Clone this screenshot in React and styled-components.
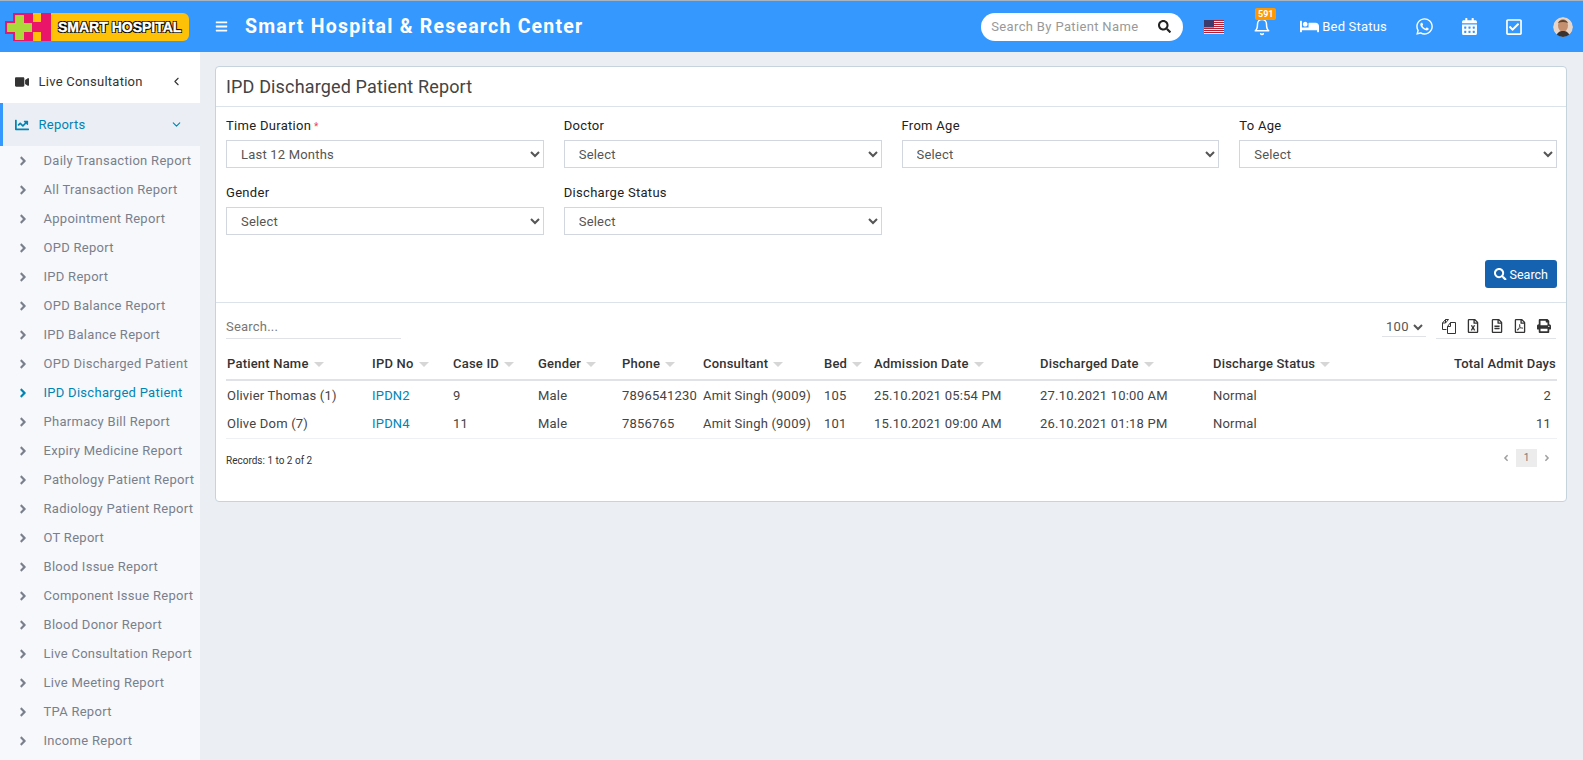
import React from 'react';
import styled, { createGlobalStyle } from 'styled-components';
import {
    FaVideo, FaChartLine, FaAngleLeft, FaAngleRight, FaBars, FaSearch, FaBed,
    FaWhatsapp, FaCalendarAlt, FaRegCheckSquare, FaRegFileExcel,
    FaRegFileAlt, FaRegFilePdf, FaPrint,
} from 'react-icons/fa';
import { FiBell, FiChevronLeft, FiChevronDown } from 'react-icons/fi';

const GlobalStyle = createGlobalStyle`
    html, body {
        margin: 0;
        height: 100%;
        overflow: hidden;
        background: #ebeff4;
        font-family: Roboto, "Liberation Sans", sans-serif;
        font-size: 13px;
        color: #444;
    }
    * { box-sizing: border-box; }
`;

const reports = [
    'Daily Transaction Report', 'All Transaction Report', 'Appointment Report', 'OPD Report',
    'IPD Report', 'OPD Balance Report', 'IPD Balance Report', 'OPD Discharged Patient',
    'IPD Discharged Patient', 'Pharmacy Bill Report', 'Expiry Medicine Report',
    'Pathology Patient Report', 'Radiology Patient Report', 'OT Report', 'Blood Issue Report',
    'Component Issue Report', 'Blood Donor Report', 'Live Consultation Report',
    'Live Meeting Report', 'TPA Report', 'Income Report',
];

const columns = [
    { title: 'Patient Name', width: 145 },
    { title: 'IPD No', width: 81 },
    { title: 'Case ID', width: 85 },
    { title: 'Gender', width: 84 },
    { title: 'Phone', width: 81 },
    { title: 'Consultant', width: 121 },
    { title: 'Bed', width: 50 },
    { title: 'Admission Date', width: 166 },
    { title: 'Discharged Date', width: 173 },
    { title: 'Discharge Status', width: 200 },
    { title: 'Total Admit Days', width: 145, right: true },
];

const rows = [
    ['Olivier Thomas (1)', 'IPDN2', '9', 'Male', '7896541230', 'Amit Singh (9009)', '105', '25.10.2021 05:54 PM', '27.10.2021 10:00 AM', 'Normal', '2'],
    ['Olive Dom (7)', 'IPDN4', '11', 'Male', '7856765', 'Amit Singh (9009)', '101', '15.10.2021 09:00 AM', '26.10.2021 01:18 PM', 'Normal', '11'],
];

const filters = [
    { label: 'Time Duration', value: 'Last 12 Months', required: true },
    { label: 'Doctor', value: 'Select' },
    { label: 'From Age', value: 'Select' },
    { label: 'To Age', value: 'Select' },
    { label: 'Gender', value: 'Select' },
    { label: 'Discharge Status', value: 'Select' },
];

const LogoMark = () => (
    <svg width="46" height="28" viewBox="0 0 46 28">
        <rect x="8" width="38" height="28" fill="#ea1569" />
        <rect x="0" y="8" width="10" height="13" fill="#ea1569" />
        <rect x="28" width="8" height="9" fill="#ffc107" />
        <rect x="28" y="19" width="8" height="9" fill="#ffc107" />
        <path d="M10 2h9v8h8v9h-8v8h-9v-8H2v-9h8z" fill="#a9d93a" />
    </svg>
);

const Flag = () => (
    <svg width="20" height="14" viewBox="0 0 20 14">
        <rect width="20" height="14" fill="#fff" />
        {[0, 2, 4, 6, 8, 10, 12].map((y) => (
            <rect key={y} y={y} width="20" height="1.1" fill="#b22234" />
        ))}
        <rect width="10" height="7.5" fill="#3c3b6e" />
    </svg>
);

const AvatarFace = () => (
    <svg width="20" height="20" viewBox="0 0 20 20">
        <circle cx="10" cy="10" r="10" fill="#e8d5c8" />
        <ellipse cx="10" cy="8.5" rx="5" ry="6.500" fill="#c48f6f" />
        <path d="M5 6c1-4 9-4 10 0-3-1.500-7-1.500-10 0z" fill="#5a4434" />
        <path d="M3 20c1-5 4-6 7-6s6 1 7 6z" fill="#3a3330" />
    </svg>
);

// two overlapping sheets, the old "files" export icon
const CopyIcon = () => (
    <svg width="15" height="15" viewBox="0 0 15 15" fill="none" stroke="currentColor" strokeWidth="1">
        <path d="M4.500 .5h3l-3 3.500H1.500zM4.500 .5v3.500M1.500 4v6.500h4" />
        <path d="M9.500 3.500h5v11h-8V7.500zM9.500 3.500v4h-3" fill="#fff" />
    </svg>
);

const App = () => {
    return (
        <>
            <GlobalStyle />
            <Header>
                <Logo>
                    <LogoMark />
                    <LogoBar>
                        <LogoText>SMART HOSPITAL</LogoText>
                    </LogoBar>
                </Logo>
                <Burger><FaBars /></Burger>
                <SiteTitle>Smart Hospital &amp; Research Center</SiteTitle>
                <HeaderRight>
                    <SearchPill>
                        <SearchInput placeholder="Search By Patient Name" />
                        <FaSearch />
                    </SearchPill>
                    <FlagBox><Flag /></FlagBox>
                    <BellBox>
                        <FiBell />
                        <Badge>591</Badge>
                    </BellBox>
                    <BedLink><FaBed /><span>Bed Status</span></BedLink>
                    <HeadIcon $size={19} $gap={27}><FaWhatsapp /></HeadIcon>
                    <HeadIcon $size={17} $gap={25}><FaCalendarAlt /></HeadIcon>
                    <HeadIcon $size={18} $gap={25}><FaRegCheckSquare /></HeadIcon>
                    <Avatar><AvatarFace /></Avatar>
                </HeaderRight>
            </Header>
            <Body>
                <Sidebar>
                    <TopItem>
                        <TopIcon><FaVideo /></TopIcon>
                        <span>Live Consultation</span>
                        <Caret><FiChevronLeft /></Caret>
                    </TopItem>
                    <ActiveItem>
                        <TopIcon><FaChartLine /></TopIcon>
                        <span>Reports</span>
                        <Caret><FiChevronDown /></Caret>
                    </ActiveItem>
                    <SubMenu>
                        {reports.map((name) => (
                            <SubItem key={name} $active={name === 'IPD Discharged Patient'}>
                                <SubArrow><FaAngleRight /></SubArrow>
                                {name}
                            </SubItem>
                        ))}
                    </SubMenu>
                </Sidebar>
                <Content>
                    <Card>
                        <CardTitle>IPD Discharged Patient Report</CardTitle>
                        <FilterForm>
                            <FilterGrid>
                                {filters.map((f) => (
                                    <div key={f.label}>
                                        <FieldLabel>
                                            {f.label}{f.required && <Required> *</Required>}
                                        </FieldLabel>
                                        <FieldSelect defaultValue={f.value}>
                                            <option>{f.value}</option>
                                        </FieldSelect>
                                    </div>
                                ))}
                            </FilterGrid>
                            <ButtonRow>
                                <SearchButton><FaSearch />Search</SearchButton>
                            </ButtonRow>
                        </FilterForm>
                        <TableArea>
                            <TableTools>
                                <TableSearch placeholder="Search..." />
                                <ToolsRight>
                                    <PageSize defaultValue="100"><option>100</option></PageSize>
                                    <ExportIcons>
                                        <CopyIcon />
                                        <FaRegFileExcel />
                                        <FaRegFileAlt />
                                        <FaRegFilePdf />
                                        <FaPrint />
                                    </ExportIcons>
                                </ToolsRight>
                            </TableTools>
                            <Table>
                                <colgroup>
                                    {columns.map((c) => <col key={c.title} style={{ width: c.width }} />)}
                                </colgroup>
                                <thead>
                                    <tr>
                                        {columns.map((c) => (
                                            <Th key={c.title} $right={c.right}>
                                                {c.title}
                                                {!c.right && <SortMark />}
                                            </Th>
                                        ))}
                                    </tr>
                                </thead>
                                <tbody>
                                    {rows.map((row) => (
                                        <tr key={row[0]}>
                                            {row.map((cell, i) => (
                                                <Td key={i} $right={columns[i].right}>
                                                    {i === 1 ? <CellLink>{cell}</CellLink> : cell}
                                                </Td>
                                            ))}
                                        </tr>
                                    ))}
                                </tbody>
                            </Table>
                            <TableFoot>
                                <Records>Records: 1 to 2 of 2</Records>
                                <Pager>
                                    <FaAngleLeft />
                                    <PageNumber>1</PageNumber>
                                    <FaAngleRight />
                                </Pager>
                            </TableFoot>
                        </TableArea>
                    </Card>
                </Content>
            </Body>
        </>
    );
};

const Header = styled.header`
    height: 52px;
    display: flex;
    align-items: center;
    background: #3598ff;
    border-top: 1px solid #a8b4c0;
    padding: 0 10px 0 5px;
    color: #fff;
`;

const Logo = styled.div`
    display: flex;
    width: 184px;
    height: 28px;
    flex-shrink: 0;
`;

const LogoBar = styled.div`
    flex: 1;
    display: flex;
    align-items: center;
    padding-left: 7px;
    background: #ffc107;
    border-radius: 0 6px 6px 0;
`;

const LogoText = styled.span`
    font-family: "Liberation Sans", sans-serif;
    font-weight: 700;
    font-size: 14px;
    white-space: nowrap;
    color: #fff;
    -webkit-text-stroke: 0.4px #fff;
    text-shadow: 1px 1px 0 #000, -1px 1px 0 #000, 1px -1px 0 #000, -1px -1px 0 #000;
`;

const Burger = styled.div`
    display: flex;
    margin-left: 26px;
    font-size: 13px;
`;

const SiteTitle = styled.div`
    margin-left: 17px;
    font-size: 19.500px;
    font-weight: 700;
    letter-spacing: 1.22px;
    white-space: nowrap;
`;

const HeaderRight = styled.div`
    margin-left: auto;
    display: flex;
    align-items: center;
`;

const SearchPill = styled.div`
    width: 202px;
    height: 28px;
    display: flex;
    align-items: center;
    padding: 0 12px 0 10px;
    background: #fff;
    border-radius: 14px;
    color: #222;
    font-size: 13px;
`;

const SearchInput = styled.input`
    flex: 1;
    min-width: 0;
    border: 0;
    outline: 0;
    padding: 0;
    font: 13px Roboto, sans-serif;
    letter-spacing: 0.35px;
    &::placeholder { color: #999; opacity: 1; }
`;

const FlagBox = styled.div`
    display: flex;
    margin-left: 21px;
`;

const BellBox = styled.div`
    position: relative;
    display: flex;
    margin-left: 29px;
    font-size: 18px;
`;

const Badge = styled.span`
    position: absolute;
    top: -10px;
    left: 2px;
    width: 21px;
    height: 12px;
    border-radius: 2px;
    background: #ff9800;
    font-size: 9px;
    font-weight: 700;
    line-height: 12px;
    text-align: center;
`;

const BedLink = styled.div`
    display: flex;
    align-items: center;
    gap: 3px;
    margin-left: 29px;
    font-size: 13px;
    letter-spacing: 0.2px;
    svg { font-size: 19px; }
`;

const HeadIcon = styled.div`
    display: flex;
    justify-content: center;
    width: 20px;
    margin-left: ${(props) => props.$gap}px;
    font-size: ${(props) => props.$size}px;
`;

const Avatar = styled.div`
    display: flex;
    margin-left: 29px;
    border-radius: 50%;
    overflow: hidden;
`;

const Body = styled.div`
    display: flex;
    height: 708px;
`;

const Sidebar = styled.aside`
    width: 200px;
    flex-shrink: 0;
    overflow: hidden;
    background: #f6f8fb;
`;

const TopItem = styled.div`
    height: 51px;
    display: flex;
    align-items: center;
    padding: 8px 17px 0 15px;
    background: #fff;
    color: #333;
    letter-spacing: 0.25px;
`;

const ActiveItem = styled(TopItem)`
    height: 43px;
    padding-top: 0;
    padding-left: 12px;
    border-left: 3px solid #3598ff;
    background: #ebeef5;
    color: #0084b4;
`;

const TopIcon = styled.span`
    display: flex;
    width: 23.500px;
    font-size: 14px;
`;

const Caret = styled.span`
    display: flex;
    margin-left: auto;
    font-size: 13px;
`;

const SubMenu = styled.div`
    padding-top: 0;
`;

const SubItem = styled.div`
    height: 29px;
    display: flex;
    align-items: center;
    padding-left: 16px;
    white-space: nowrap;
    letter-spacing: 0.28px;
    color: ${(props) => (props.$active ? '#0084b4' : '#7a7f8c')};
`;

const SubArrow = styled.span`
    display: flex;
    width: 27.500px;
    font-size: 14px;
`;

const Content = styled.main`
    flex: 1;
    min-width: 0;
    padding: 14px 16px 0 15px;
`;

const Card = styled.section`
    background: #fff;
    border: 1px solid #c5d3dd;
    border-radius: 4px;
`;

const CardTitle = styled.h3`
    margin: 0;
    height: 40px;
    padding: 0 10px;
    border-bottom: 1px solid #dbe2ea;
    font-size: 18px;
    font-weight: 400;
    line-height: 39px;
    letter-spacing: 0.15px;
    color: #444;
`;

const FilterForm = styled.div`
    padding: 11px 9px 14px 10px;
    border-bottom: 1px solid #dbe2ea;
`;

const FilterGrid = styled.div`
    display: grid;
    grid-template-columns: repeat(4, 1fr);
    column-gap: 20px;
    row-gap: 17px;
`;

const FieldLabel = styled.div`
    height: 16px;
    margin-bottom: 6px;
    line-height: 16px;
    letter-spacing: 0.3px;
    color: #222;
`;

const Required = styled.span`
    color: #e84a4a;
    font-size: 10px;
`;

const FieldSelect = styled.select`
    display: block;
    width: 100%;
    height: 28px;
    padding: 0 10px;
    border: 1px solid #d2d6de;
    border-radius: 0;
    background: #fff;
    font: 13px Roboto, sans-serif;
    letter-spacing: 0.2px;
    color: #555;
    outline: 0;
`;

const ButtonRow = styled.div`
    display: flex;
    justify-content: flex-end;
    margin-top: 25px;
`;

const SearchButton = styled.button`
    width: 72px;
    height: 28px;
    display: flex;
    align-items: center;
    justify-content: center;
    gap: 3px;
    padding: 0;
    border: 0;
    border-radius: 3px;
    background: #1563b0;
    color: #fff;
    font: 400 12.500px Roboto, sans-serif;
`;

const TableArea = styled.div`
    padding: 14px 10px 0;
    height: 198px;
`;

const TableTools = styled.div`
    display: flex;
    justify-content: space-between;
    align-items: flex-end;
    height: 22px;
`;

const TableSearch = styled.input`
    width: 175px;
    height: 22px;
    padding: 0 0 3px;
    border: 0;
    border-bottom: 1px solid #dfe3e8;
    outline: 0;
    font: 13px Roboto, sans-serif;
    letter-spacing: 0.2px;
    &::placeholder { color: #777; opacity: 1; }
`;

const ToolsRight = styled.div`
    display: flex;
    gap: 10px;
`;

const PageSize = styled.select`
    width: 44px;
    height: 20px;
    padding: 0;
    border: 0;
    border-bottom: 1px solid #dfe3e8;
    background: #fff;
    font: 13px Roboto, sans-serif;
    letter-spacing: 0.3px;
    color: #555;
    outline: 0;
`;

const ExportIcons = styled.div`
    width: 120px;
    height: 22px;
    display: flex;
    align-items: center;
    justify-content: space-between;
    padding: 0 5px 3px 5px;
    border-bottom: 1px solid #dfe3e8;
    color: #333;
    font-size: 14px;
`;

const Table = styled.table`
    width: 1331px;
    margin-top: 12px;
    table-layout: fixed;
    border-collapse: collapse;
    border-bottom: 1px solid #eef0f3;
`;

const Th = styled.th`
    height: 29px;
    padding: 0 ${(props) => (props.$right ? '1px' : '1px')} 3px 1px;
    border-bottom: 2px solid #dfe3e8;
    text-align: ${(props) => (props.$right ? 'right' : 'left')};
    font-weight: 500;
    color: #333;
    white-space: nowrap;
    letter-spacing: 0.2px;
`;

const SortMark = styled.span`
    display: inline-block;
    margin-left: 5px;
    vertical-align: middle;
    border-left: 5px solid transparent;
    border-right: 5px solid transparent;
    border-top: 5px solid #d6d6d6;
`;

const Td = styled.td`
    height: 29px;
    padding: 0 ${(props) => (props.$right ? '6px' : '1px')} 0 1px;
    text-align: ${(props) => (props.$right ? 'right' : 'left')};
    white-space: nowrap;
    letter-spacing: 0.2px;
    color: #444;
`;

const CellLink = styled.a`
    color: #0084b4;
`;

const TableFoot = styled.div`
    display: flex;
    justify-content: space-between;
    align-items: flex-start;
    margin-top: 10px;
    padding-right: 4px;
`;

const Records = styled.div`
    padding-top: 6px;
    font-size: 10px;
    line-height: 12px;
    color: #333;
`;

const Pager = styled.div`
    display: flex;
    align-items: center;
    gap: 5px;
    font-size: 10px;
    color: #a0a0a0;
`;

const PageNumber = styled.span`
    width: 21px;
    height: 18px;
    background: #ececec;
    line-height: 18px;
    text-align: center;
    color: #777;
`;

export default App;
